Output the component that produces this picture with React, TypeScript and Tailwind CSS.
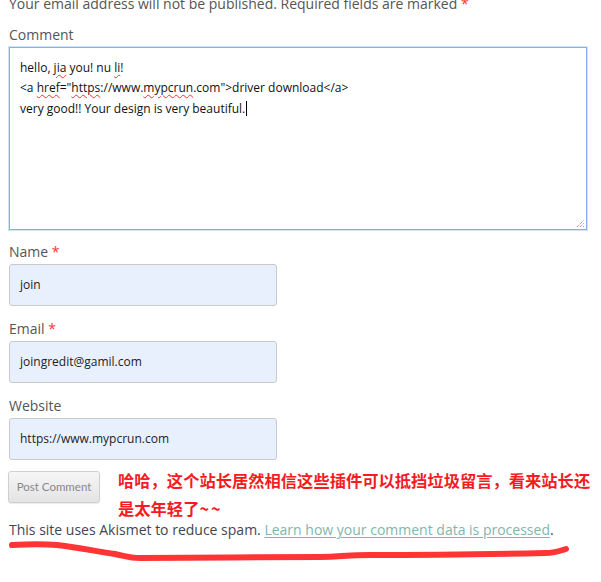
import React from "react";

const Sq = ({ children }: { children: React.ReactNode }) => (
  <span className="underline decoration-wavy decoration-[#e33] decoration-1 underline-offset-2">{children}</span>
);

function Field({ label, required, value }: { label: string; required?: boolean; value: string }) {
  return (
    <div>
      <p className="leading-[22px]">
        {label}
        {required && <span className="text-[#f33]"> *</span>}
      </p>
      <div className="mt-[1px] flex h-[42px] w-[268px] items-center rounded-[3px] border border-[#c9c9c9] bg-[#e8f0fe] pl-[10px] text-[12px] text-[#222]">
        {value}
      </div>
    </div>
  );
}

export default function App() {
  return (
    <div className="relative h-[582px] w-[601px] overflow-hidden bg-white font-['Open_Sans',sans-serif] text-[14px] text-[#555]">
      <div className="pl-[9px]">
        <p className="-mt-[7px] leading-[22px]">
          Your email address will not be published. Required fields are marked <span className="text-[#f33]">*</span>
        </p>
        <p className="mt-[9px] leading-[22px]">Comment</p>
        <div className="relative mt-[1px] h-[183px] w-[578px] border border-[#86aef0] px-[10px] pt-[10px] text-[12px] leading-[20px] text-[#111] shadow-[0_0_0_1px_#d2e2fb]">
          <p>
            hello, <Sq>jia</Sq> you! nu <Sq>li</Sq>!
          </p>
          <p>
            &lt;a <Sq>href</Sq>="<Sq>https</Sq>://www.<Sq>mypcrun</Sq>.com"&gt;driver download&lt;/a&gt;
          </p>
          <p>
            very good!! Your design is very beautiful.
            <span className="ml-[1px] inline-block h-[15px] w-px translate-y-[3px] bg-black" />
          </p>
          <svg className="absolute bottom-[1px] right-[1px]" width="9" height="9" viewBox="0 0 9 9">
            <path d="M1 8 L8 1 M4 8 L8 4 M7 8 L8 7" stroke="#777" strokeWidth="1" strokeDasharray="1 1" />
          </svg>
        </div>
        <div className="mt-[11px] flex flex-col gap-[12px]">
          <Field label="Name" required value="join" />
          <Field label="Email" required value="joingredit@gamil.com" />
          <Field label="Website" value="https://www.mypcrun.com" />
        </div>
        <div className="mt-[11px] flex items-start">
          <button className="-ml-[1px] h-[32px] w-[92px] rounded-[3px] border border-[#cfcfcf] bg-gradient-to-b from-[#f6f6f6] to-[#e4e4e4] font-['Lato',sans-serif] text-[11.5px] text-[#888] shadow-[0_1px_1px_rgba(0,0,0,0.08)]">
            Post Comment
          </button>
          <p className="-mt-[5px] ml-[18px] whitespace-nowrap font-['Noto_Sans_CJK_SC',sans-serif] text-[16.3px] font-bold leading-[28px] text-[#f41c22]">
            哈哈，这个站长居然相信这些插件可以抵挡垃圾留言，看来站长还
            <br />
            是太年轻了<span className="tracking-[2px]">~~</span>
          </p>
        </div>
        <p className="-mt-[3px] leading-[22px] text-[#3f4650]">
          This site uses Akismet to reduce spam.{" "}
          <a className="text-[#7fb6ae] underline underline-offset-2">Learn how your comment data is processed</a>.
        </p>
      </div>
      <svg className="pointer-events-none absolute left-0 top-0" width="601" height="582" viewBox="0 0 601 582">
        <path
          d="M12 545 C30 544 45 544 57 545 C75 547 95 551 115 554 C125 556 130 558 140 558 C200 558 260 557 320 557 C340 557 345 555 370 555 C430 555 500 554 545 553 C555 553 560 551 566 549"
          fill="none"
          stroke="#ff3535"
          strokeWidth="6"
          strokeLinecap="round"
          strokeLinejoin="round"
        />
      </svg>
    </div>
  );
}
